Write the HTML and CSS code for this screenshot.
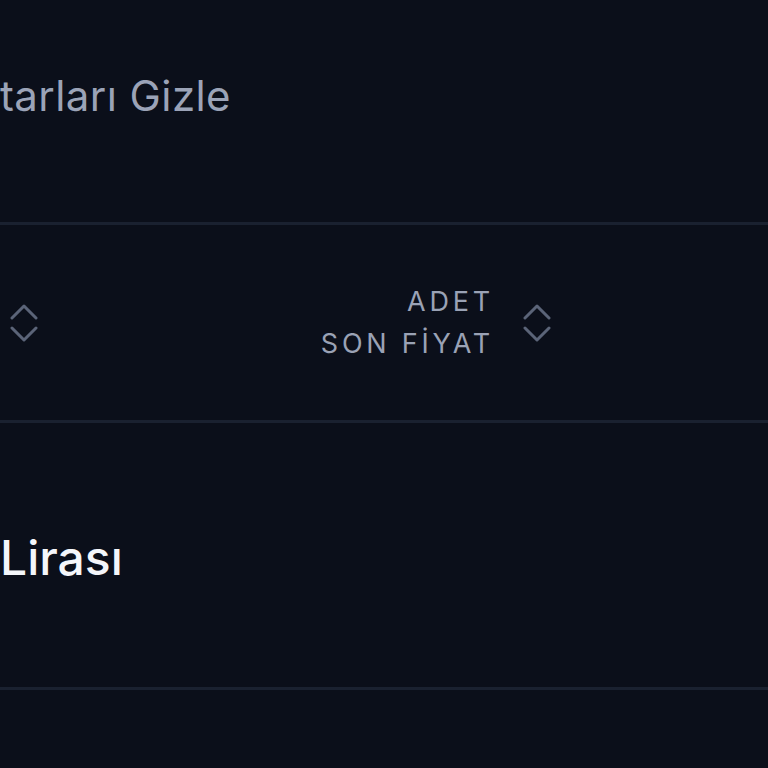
FILE: index.html
```html
<!DOCTYPE html>
<html lang="tr">
<head>
    <meta charset="UTF-8">
    <meta name="viewport" content="width=device-width, initial-scale=1.0">
    <title>Portföy</title>
    <link rel="stylesheet" href="styles.css">
</head>
<body>
    <div class="toolbar">
        <span class="hide-toggle">tarları Gizle</span>
    </div>

    <div class="table-head">
        <div class="col col-name">
            <svg class="sort-icon" viewBox="0 0 28 38" fill="none" stroke="currentColor" stroke-width="3" stroke-linecap="round" stroke-linejoin="round">
                <path d="M2 14 L14 2 L26 14"/>
                <path d="M2 24 L14 36 L26 24"/>
            </svg>
        </div>
        <div class="col col-qty">
            <span class="label">ADET<br>SON FİYAT</span>
            <svg class="sort-icon" viewBox="0 0 28 38" fill="none" stroke="currentColor" stroke-width="3" stroke-linecap="round" stroke-linejoin="round">
                <path d="M2 14 L14 2 L26 14"/>
                <path d="M2 24 L14 36 L26 24"/>
            </svg>
        </div>
    </div>

    <div class="row">
        <span class="asset-name">Lirası</span>
    </div>

    <div class="row"></div>
</body>
</html>
```

FILE: styles.css
```css
html, body {
    margin: 0;
    padding: 0;
    background-color: #0b0f1a;
    font-family: Inter, "Noto Sans", sans-serif;
    overflow: hidden;
}
.toolbar {
    height: 222px;
    border-bottom: 3px solid #1a2130;
    display: flex;
    align-items: flex-start;
}
.hide-toggle {
    margin-top: 70px;
    font-size: 42px;
    letter-spacing: 0.01em;
    color: #9ba3b7;
    white-space: nowrap;
}
.table-head {
    height: 195px;
    border-bottom: 3px solid #1a2130;
    display: flex;
    align-items: center;
}
.col {
    display: flex;
    align-items: center;
    gap: 31px;
}
.col-name {
    margin-left: 10px;
}
.col-qty {
    margin-left: auto;
    margin-right: 217px;
}
.label {
    font-size: 27px;
    line-height: 42px;
    letter-spacing: 0.14em;
    margin-right: -2px;
    color: #9aa2b5;
    text-align: right;
}
.sort-icon {
    width: 28px;
    height: 38px;
    color: #5b6478;
    flex-shrink: 0;
}
.row {
    height: 264px;
    border-bottom: 3px solid #1a2130;
    display: flex;
    align-items: center;
}
.asset-name {
    margin-top: 4px;
    font-size: 48px;
    color: #f4f6fa;
    white-space: nowrap;
    font-weight: 500;
}
```
